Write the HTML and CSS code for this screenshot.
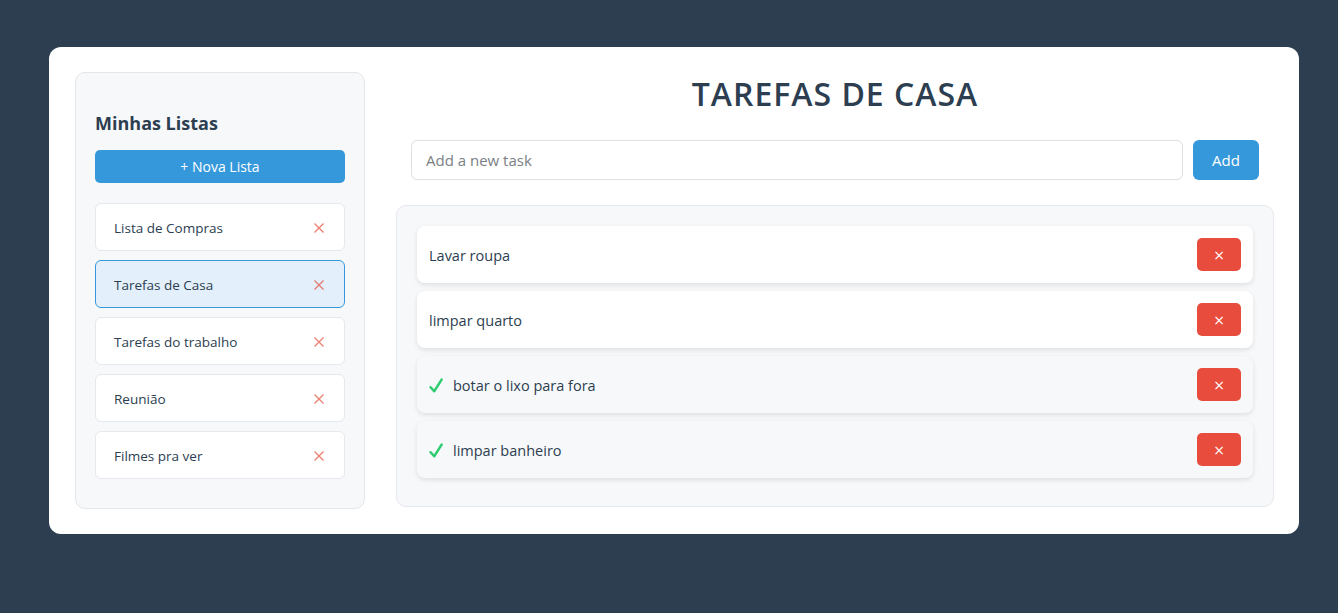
FILE: index.html
```html
<!DOCTYPE html>
<html lang="pt">
<head>
<meta charset="utf-8">
<title>Minhas Listas</title>
<link rel="stylesheet" href="styles.css">
</head>
<body>
<div class="app">
  <aside class="sidebar">
    <h2 class="sidebar-title">Minhas Listas</h2>
    <button class="new-list">+ Nova Lista</button>
    <ul class="lists">
      <li class="list-item"><span>Lista de Compras</span><svg class="list-del" viewBox="0 0 10 10"><path d="M0.5 0.5L9.5 9.5M9.5 0.5L0.5 9.5"/></svg></li>
      <li class="list-item active"><span>Tarefas de Casa</span><svg class="list-del" viewBox="0 0 10 10"><path d="M0.5 0.5L9.5 9.5M9.5 0.5L0.5 9.5"/></svg></li>
      <li class="list-item"><span>Tarefas do trabalho</span><svg class="list-del" viewBox="0 0 10 10"><path d="M0.5 0.5L9.5 9.5M9.5 0.5L0.5 9.5"/></svg></li>
      <li class="list-item"><span>Reunião</span><svg class="list-del" viewBox="0 0 10 10"><path d="M0.5 0.5L9.5 9.5M9.5 0.5L0.5 9.5"/></svg></li>
      <li class="list-item"><span>Filmes pra ver</span><svg class="list-del" viewBox="0 0 10 10"><path d="M0.5 0.5L9.5 9.5M9.5 0.5L0.5 9.5"/></svg></li>
    </ul>
  </aside>
  <main class="main">
    <h1 class="title">TAREFAS DE CASA</h1>
    <div class="add-row">
      <input class="task-input" type="text" placeholder="Add a new task">
      <button class="add-btn">Add</button>
    </div>
    <ul class="tasks">
      <li class="task"><span class="task-text">Lavar roupa</span><button class="del-btn">×</button></li>
      <li class="task"><span class="task-text">limpar quarto</span><button class="del-btn">×</button></li>
      <li class="task done"><svg class="check" viewBox="0 0 14 15"><path d="M1.6 9.2L5.2 13.3L12.6 1.6"/></svg><span class="task-text">botar o lixo para fora</span><button class="del-btn">×</button></li>
      <li class="task done"><svg class="check" viewBox="0 0 14 15"><path d="M1.6 9.2L5.2 13.3L12.6 1.6"/></svg><span class="task-text">limpar banheiro</span><button class="del-btn">×</button></li>
    </ul>
  </main>
</div>
</body>
</html>
```

FILE: styles.css
```css
* { box-sizing: border-box; }

body {
  margin: 0;
  padding: 47px 39px 47px 49px;
  background: #2c3e50;
  font-family: "Open Sans", "Noto Sans", sans-serif;
  color: #2c3e50;
}

.app {
  background: #ffffff;
  border-radius: 12px;
  padding: 25px 25px 25px 26px;
  display: flex;
  gap: 31px;
  align-items: flex-start;
}

.sidebar {
  width: 290px;
  flex: none;
  background: #f7f8fa;
  border: 1px solid #e3e6ea;
  border-radius: 10px;
  padding: 20px 19px 20px 19px;
}

.sidebar-title {
  margin: 17px 0 14px;
  font-size: 18px;
  font-weight: 700;
  line-height: 26px;
  color: #2c3e50;
}

.new-list {
  display: block;
  width: 100%;
  height: 33px;
  border: none;
  border-radius: 5px;
  background: #3498db;
  color: #fff;
  font-family: inherit;
  font-size: 14px;
  margin-bottom: 20px;
  cursor: pointer;
}

.lists {
  list-style: none;
  margin: 0;
  padding: 0;
}

.list-item {
  display: flex;
  align-items: center;
  justify-content: space-between;
  height: 48px;
  margin-bottom: 9px;
  padding: 2px 20px 0 18px;
  background: #fff;
  border: 1px solid #e5e8ec;
  border-radius: 6px;
  font-size: 13.5px;
  color: #2c3e50;
}

.list-item.active {
  background: #e3f0fb;
  border-color: #3498db;
}

.list-del {
  width: 10px;
  height: 10px;
  stroke: #e74c3c;
  stroke-width: 1.4;
  opacity: 0.7;
  fill: none;
}

.main {
  flex: 1;
  min-width: 0;
}

.title {
  margin: 0 0 24px;
  text-align: center;
  font-size: 32px;
  font-weight: 600;
  letter-spacing: 1px;
  line-height: 44px;
  color: #2c3e50;
}

.add-row {
  display: flex;
  gap: 10px;
  padding: 0 15px;
  margin-bottom: 25px;
}

.task-input {
  flex: 1;
  height: 40px;
  border: 1px solid #dcdfe3;
  border-radius: 6px;
  padding: 0 14px;
  font-family: inherit;
  font-size: 15px;
  color: #2c3e50;
  outline: none;
}

.task-input::placeholder { color: #7a7f85; }

.add-btn {
  width: 66px;
  height: 40px;
  border: none;
  border-radius: 6px;
  background: #3498db;
  color: #fff;
  font-family: inherit;
  font-size: 15px;
  cursor: pointer;
}

.tasks {
  list-style: none;
  margin: 0;
  background: #f7f8fa;
  border: 1px solid #e5e8ec;
  border-radius: 10px;
  padding: 20px;
}

.task {
  display: flex;
  align-items: center;
  height: 57px;
  padding: 0 12px;
  margin-bottom: 8px;
  background: #fff;
  border-radius: 8px;
  box-shadow: 0 2px 5px rgba(0, 0, 0, 0.1);
  font-size: 14.5px;
}

.task.done { background: #f7f8fa; }

.check {
  width: 14px;
  height: 15px;
  flex: none;
  margin: 2px 10px 0 0;
  fill: none;
  stroke: #2ecc71;
  stroke-width: 2.5;
  stroke-linecap: round;
  stroke-linejoin: round;
}

.task-text {
  flex: 1;
  padding-top: 2px;
}

.del-btn {
  width: 44px;
  height: 33px;
  border: none;
  border-radius: 5px;
  background: #e74c3c;
  color: #fff;
  font-family: "DejaVu Sans", sans-serif;
  font-size: 14px;
  cursor: pointer;
  padding: 0;
}
```
